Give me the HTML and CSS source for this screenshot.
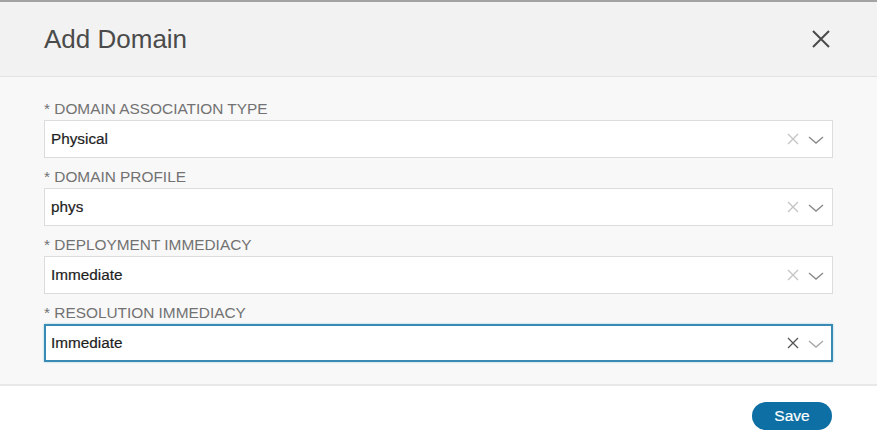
FILE: index.html
```html
<!DOCTYPE html>
<html lang="en">
<head>
    <meta charset="UTF-8">
    <title>Add Domain</title>
    <link rel="stylesheet" href="styles.css">
</head>
<body>
    <div class="modal">
        <div class="modal-header">
            <h2 class="modal-title">Add Domain</h2>
            <button class="close-btn" aria-label="Close">
                <svg width="20" height="20" viewBox="0 0 20 20"><path d="M2 2 L18 18 M18 2 L2 18" stroke="#4a4a4a" stroke-width="2" fill="none"/></svg>
            </button>
        </div>
        <div class="modal-body">
            <div class="field">
                <label>* Domain Association Type</label>
                <div class="select">
                    <span class="value">Physical</span>
                    <span class="clear"><svg width="12" height="12" viewBox="0 0 12 12"><path d="M1 1 L11 11 M11 1 L1 11" stroke="currentColor" stroke-width="1.3" fill="none"/></svg></span>
                    <span class="caret"><svg width="16" height="10" viewBox="0 0 16 10"><path d="M1 2 L8 8 L15 2" stroke="currentColor" stroke-width="1.4" fill="none"/></svg></span>
                </div>
            </div>
            <div class="field">
                <label>* Domain Profile</label>
                <div class="select">
                    <span class="value">phys</span>
                    <span class="clear"><svg width="12" height="12" viewBox="0 0 12 12"><path d="M1 1 L11 11 M11 1 L1 11" stroke="currentColor" stroke-width="1.3" fill="none"/></svg></span>
                    <span class="caret"><svg width="16" height="10" viewBox="0 0 16 10"><path d="M1 2 L8 8 L15 2" stroke="currentColor" stroke-width="1.4" fill="none"/></svg></span>
                </div>
            </div>
            <div class="field">
                <label>* Deployment Immediacy</label>
                <div class="select">
                    <span class="value">Immediate</span>
                    <span class="clear"><svg width="12" height="12" viewBox="0 0 12 12"><path d="M1 1 L11 11 M11 1 L1 11" stroke="currentColor" stroke-width="1.3" fill="none"/></svg></span>
                    <span class="caret"><svg width="16" height="10" viewBox="0 0 16 10"><path d="M1 2 L8 8 L15 2" stroke="currentColor" stroke-width="1.4" fill="none"/></svg></span>
                </div>
            </div>
            <div class="field">
                <label>* Resolution Immediacy</label>
                <div class="select focused">
                    <span class="value">Immediate</span>
                    <span class="clear"><svg width="12" height="12" viewBox="0 0 12 12"><path d="M1 1 L11 11 M11 1 L1 11" stroke="currentColor" stroke-width="1.3" fill="none"/></svg></span>
                    <span class="caret"><svg width="16" height="10" viewBox="0 0 16 10"><path d="M1 2 L8 8 L15 2" stroke="currentColor" stroke-width="1.4" fill="none"/></svg></span>
                </div>
            </div>
        </div>
        <div class="modal-footer">
            <button class="btn-save">Save</button>
        </div>
    </div>
</body>
</html>
```

FILE: styles.css
```css
body {
    margin: 0;
    background: #fff;
    font-family: "Liberation Sans", Arial, sans-serif;
}

.modal {
    border-top: 2px solid #a3a3a3;
    height: 444px;
    display: flex;
    flex-direction: column;
}

.modal-header {
    height: 74px;
    background: #f2f2f2;
    border-bottom: 1px solid #e2e2e2;
    display: flex;
    align-items: center;
    justify-content: space-between;
    padding: 0 44px;
}

.modal-title {
    margin: 0;
    font-size: 26px;
    font-weight: normal;
    color: #4b4b4b;
}

.close-btn {
    background: none;
    border: none;
    padding: 0;
    margin-right: 2px;
    display: flex;
    cursor: pointer;
}

.modal-body {
    background: #f8f8f8;
    padding: 23px 44px 22px;
    border-bottom: 2px solid #e8e8e8;
    display: flex;
    flex-direction: column;
    gap: 10px;
}

.field label {
    display: block;
    font-size: 15.4px;
    line-height: 18px;
    color: #727272;
    text-transform: uppercase;
    margin-bottom: 2px;
}

.select {
    height: 36px;
    background: #fff;
    border: 1px solid #dcdcdc;
    display: flex;
    align-items: center;
    padding: 0 8px 0 6px;
}

.select .value {
    flex: 1;
    font-size: 15.3px;
    color: #1e1e1e;
    -webkit-text-stroke: 0.2px #1e1e1e;
}

.select .clear {
    color: #c4c4c4;
    display: flex;
    margin-right: 9px;
}

.select .caret {
    color: #8a8a8a;
    display: flex;
    margin-top: 2px;
}

.select.focused {
    border: 2px solid #3a8bb3;
    height: 34px;
    padding: 0 7px 0 5px;
    box-shadow: 0 0 2px #9fd0e6;
}

.select.focused .clear {
    color: #555;
}

.select.focused .caret {
    color: #a8a8a8;
}

.modal-footer {
    flex: 1;
    display: flex;
    justify-content: flex-end;
    align-items: flex-start;
    padding: 16px 45px 0;
}

.btn-save {
    width: 80px;
    height: 28px;
    border: none;
    border-radius: 14px;
    background: #0d6fa3;
    color: #fff;
    font-family: "Liberation Sans", Arial, sans-serif;
    font-size: 15.5px;
    -webkit-text-stroke: 0.2px #fff;
    cursor: pointer;
}
```
